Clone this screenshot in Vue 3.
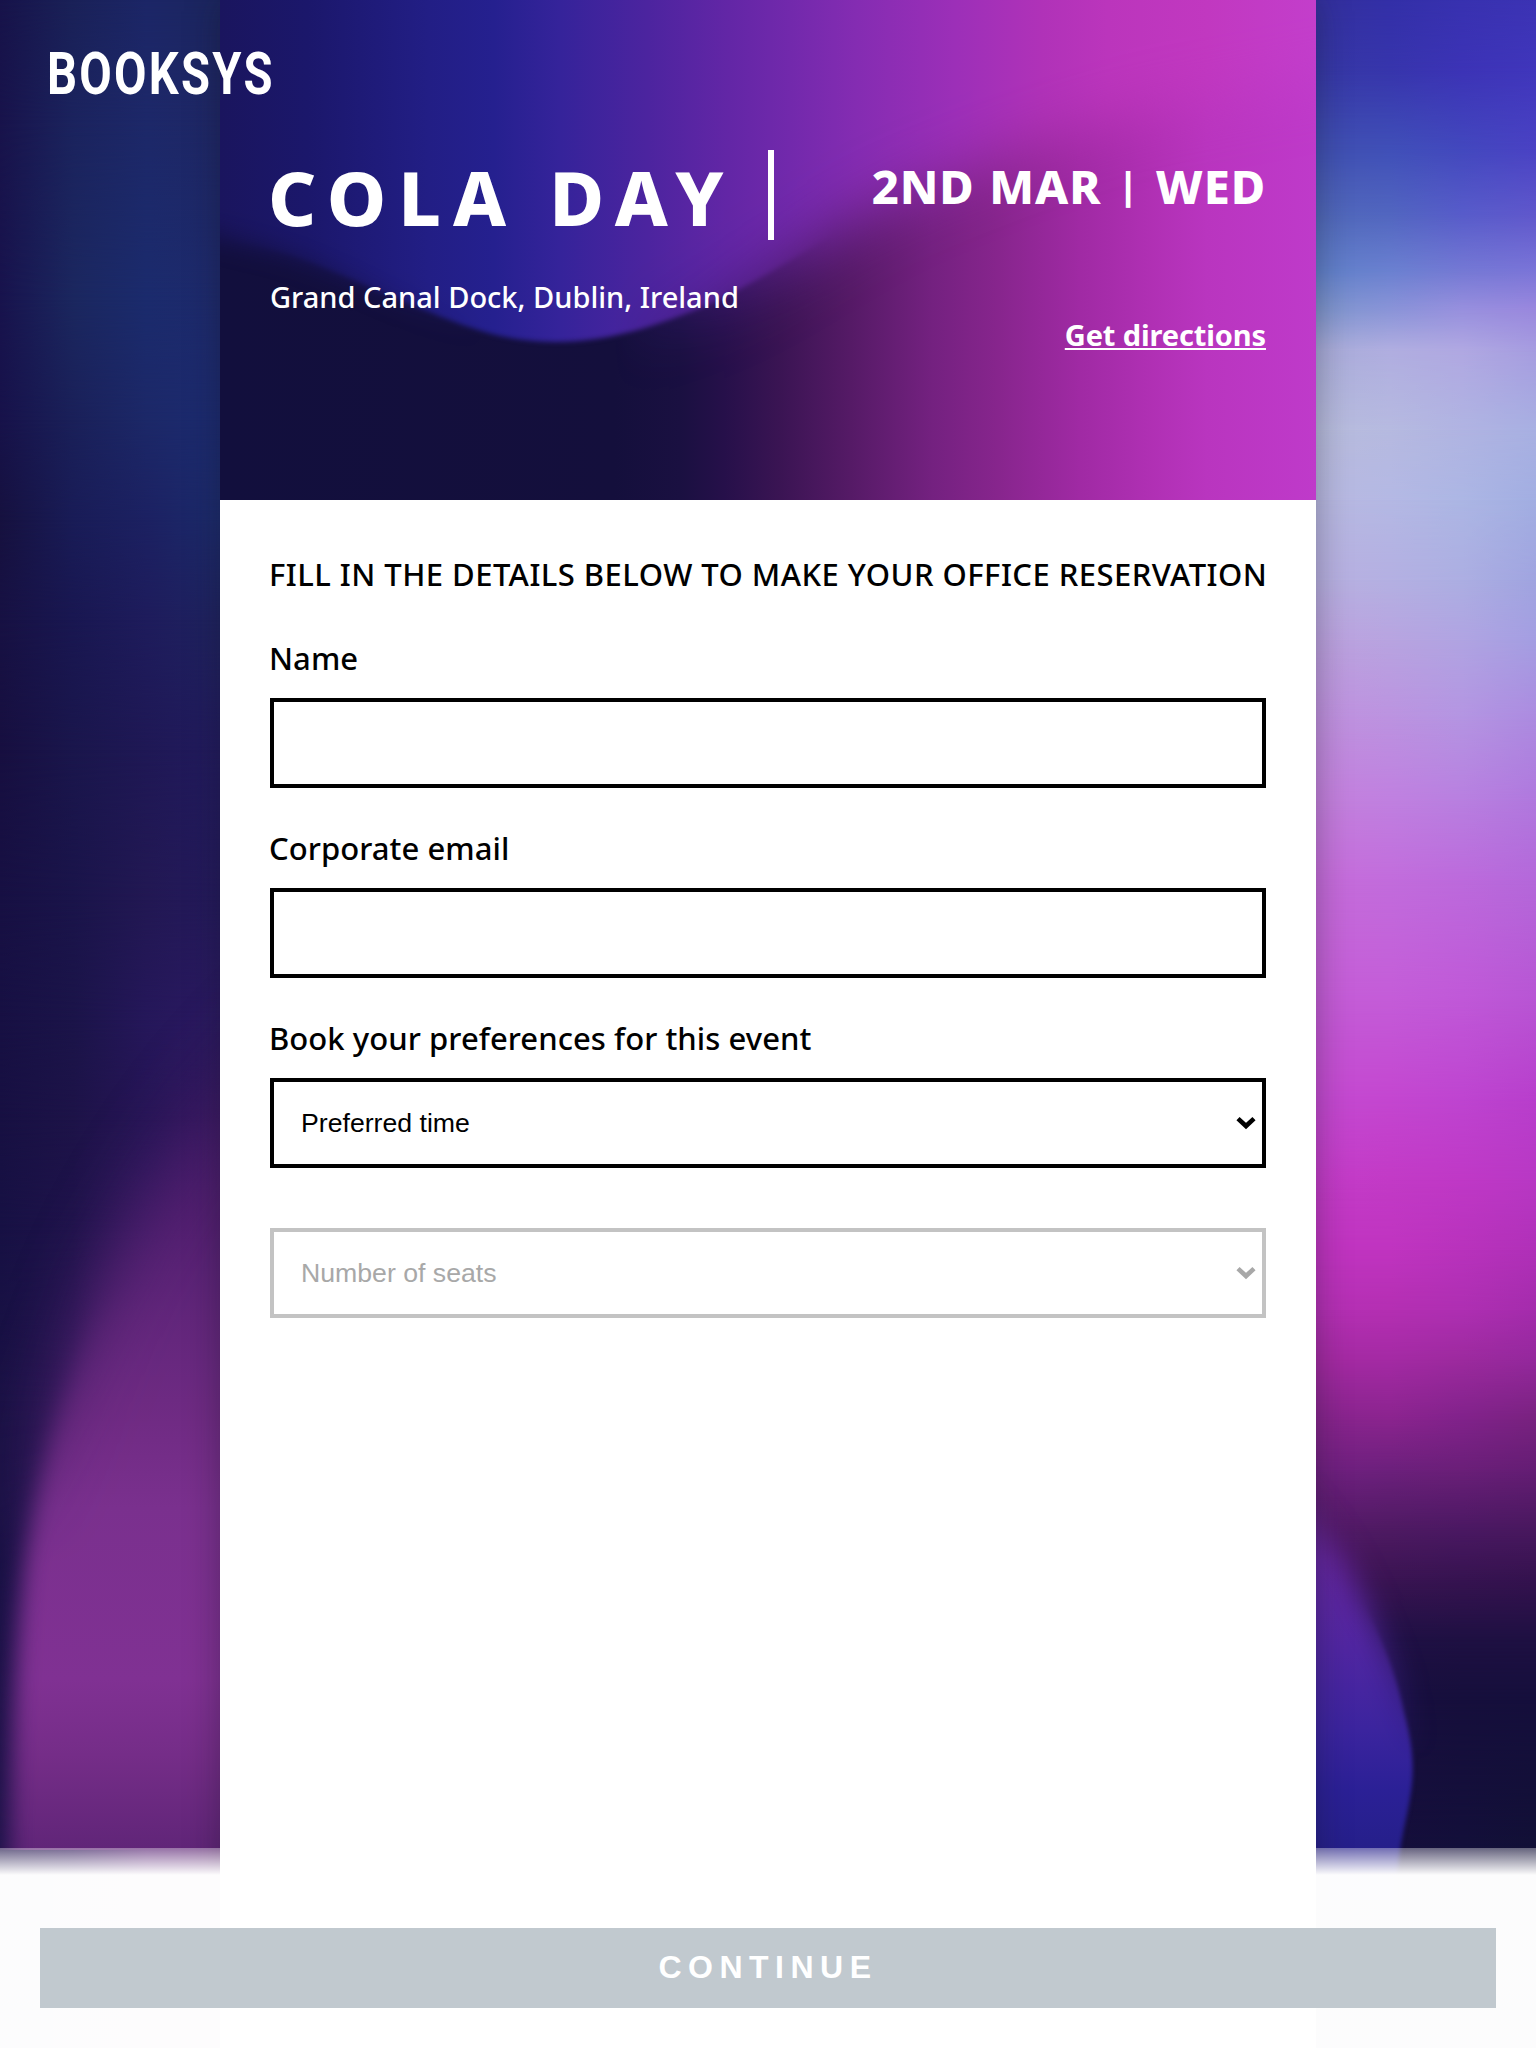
<script setup>
import { ref } from 'vue'

const name = ref('')
const email = ref('')

// Gradient meshes: [y, colours from left to right]
const leftMesh = [
  [0, '#17134a', '#1a2158', '#1c2667', '#1c265f'],
  [120, '#18134b', '#1b235e', '#1d2869', '#1f2766'],
  [300, '#18134d', '#1b275f', '#1b2b6d', '#1e2a6c'],
  [420, '#17124a', '#1a2059', '#1c2868', '#1c2b70'],
  [520, '#16113f', '#191c57', '#1c2162', '#1c2b6c'],
  [620, '#171143', '#191751', '#1e1c5c', '#1f2360'],
  [750, '#170f40', '#1a164c', '#1f1855', '#221b5e'],
  [900, '#171043', '#1a144a', '#221853', '#241a5c'],
  [1020, '#171043', '#1b1449', '#25175a', '#2c1a62'],
  [1120, '#171042', '#1d1348', '#271556', '#34185e'],
  [1230, '#171144', '#1f134b', '#34195e', '#481c68'],
  [1400, '#191144', '#241450', '#4a2068', '#602475'],
  [1850, '#1c1248', '#30185a', '#592475', '#602475']
]
const rightMesh = [
  [0, '#33309c', '#332fa8', '#3831b0', '#3c33b4'],
  [70, '#3638a4', '#3735ac', '#3c33b6', '#4036bc'],
  [150, '#4050b0', '#4050b8', '#4348be', '#4a42c4'],
  [215, '#5068b8', '#5266c0', '#585cca', '#6058cc'],
  [270, '#6080c8', '#6a80d0', '#7478d4', '#7a74d8'],
  [310, '#7f96cc', '#8a94d8', '#9890de', '#9a88de'],
  [350, '#a8acd8', '#b0aee0', '#b0a8e2', '#a69ce0'],
  [430, '#b8bcdc', '#b6bae0', '#b0b4e2', '#a8b0e2'],
  [500, '#b8b8e0', '#b4b8e4', '#acb6e4', '#a2aee2'],
  [580, '#b8b0e0', '#b4b0e2', '#acaee2', '#a0a4e0'],
  [640, '#bca2de', '#b8a4e0', '#b0a4e2', '#a49ee2'],
  [720, '#c090de', '#bc92e0', '#b494e2', '#ac8ae0'],
  [800, '#c480dc', '#c080e0', '#b87fe0', '#b078de'],
  [880, '#c66cda', '#c26cdc', '#bc6adc', '#b468da'],
  [1000, '#c45cd6', '#c45cd8', '#c058d8', '#b855d4'],
  [1100, '#c44ad0', '#c446d0', '#be44d0', '#b83ecc'],
  [1180, '#c43cc8', '#c23ac6', '#bf38c6', '#b838c4'],
  [1250, '#c034c0', '#c034c0', '#b832bc', '#b030b8'],
  [1310, '#b430b4', '#b42fb2', '#ae2fb2', '#a42cac'],
  [1360, '#a42aa2', '#a42aa4', '#9c2a9e', '#94289c'],
  [1420, '#86248c', '#8a248e', '#80228a', '#78227f'],
  [1470, '#702080', '#6c207c', '#6a1f78', '#641d74'],
  [1530, '#521a66', '#4e1a62', '#4a1862', '#48185e'],
  [1580, '#3c1452', '#3a1452', '#361350', '#34124e'],
  [1640, '#201044', '#1f1044', '#1e1042', '#1e1042'],
  [1700, '#181040', '#180f3f', '#160f3c', '#150f3c'],
  [1850, '#170f3e', '#150e3b', '#130f3a', '#121036']
]

function layers(mesh) {
  return mesh.map(([y, ...colours], i) => {
    const style = { background: `linear-gradient(to right, ${colours.join(', ')})` }
    if (i > 0) {
      style.maskImage = `linear-gradient(to bottom, transparent ${mesh[i - 1][0]}px, #000 ${y}px)`
    }
    return style
  })
}
const leftLayers = layers(leftMesh)
const rightLayers = layers(rightMesh)
</script>

<template>
  <div class="page">
    <div class="side">
      <div v-for="(s, i) in leftLayers" :key="i" class="layer" :style="s"></div>
      <svg class="glow" viewBox="0 0 220 950" aria-hidden="true">
        <defs>
          <linearGradient id="glowFill" x1="0" x2="0" y1="0" y2="950" gradientUnits="userSpaceOnUse">
            <stop offset=".1" stop-color="#2e195f" /><stop offset=".22" stop-color="#421b68" />
            <stop offset=".33" stop-color="#521f70" /><stop offset=".44" stop-color="#62267b" />
            <stop offset=".55" stop-color="#702b84" /><stop offset=".64" stop-color="#7a308e" />
            <stop offset=".82" stop-color="#803193" /><stop offset=".9" stop-color="#752d88" />
            <stop offset="1" stop-color="#602578" />
          </linearGradient>
          <linearGradient id="glowDown" x1="0" x2="0" y1="0" y2="950" gradientUnits="userSpaceOnUse">
            <stop offset=".4" stop-color="#000" /><stop offset=".7" stop-color="#fff" />
          </linearGradient>
          <filter id="g12" x="-40%" y="-20%" width="180%" height="140%"><feGaussianBlur stdDeviation="11" /></filter>
          <filter id="g30" x="-40%" y="-20%" width="180%" height="140%"><feGaussianBlur stdDeviation="36" /></filter>
          <path id="glowEdge" d="M330 90 C260 150 200 220 160 285 C125 340 100 390 78 450 C52 520 34 590 24 670 C15 750 11 850 9 1050 H330 Z" />
          <mask id="mGlow" maskUnits="userSpaceOnUse" x="0" y="0" width="220" height="950"><rect width="220" height="950" fill="url(#glowDown)" /></mask>
          <mask id="glowShape" maskUnits="userSpaceOnUse" x="0" y="0" width="220" height="950">
            <use href="#glowEdge" fill="#fff" filter="url(#g30)" />
            <g mask="url(#mGlow)">
              <rect width="220" height="950" fill="#000" />
              <use href="#glowEdge" fill="#fff" filter="url(#g12)" />
            </g>
          </mask>
        </defs>
        <rect width="220" height="950" fill="url(#glowFill)" mask="url(#glowShape)" />
      </svg>
    </div>

    <main class="card">
      <header class="hero">
        <svg class="hero-art" viewBox="0 0 1096 500" preserveAspectRatio="none" aria-hidden="true">
          <defs>
            <linearGradient id="base" x1="0" x2="1096" y1="0" y2="0" gradientUnits="userSpaceOnUse">
              <stop offset="0" stop-color="#120f3d" /><stop offset=".36" stop-color="#140f3c" />
              <stop offset=".42" stop-color="#1a1041" /><stop offset=".46" stop-color="#26104a" />
              <stop offset=".51" stop-color="#3a1453" /><stop offset=".575" stop-color="#551a66" />
              <stop offset=".65" stop-color="#742180" /><stop offset=".71" stop-color="#87258d" />
              <stop offset=".785" stop-color="#a02aa4" /><stop offset=".85" stop-color="#b030b4" />
              <stop offset=".9" stop-color="#b935bf" /><stop offset="1" stop-color="#bf3aca" />
            </linearGradient>
            <linearGradient id="wave" x1="0" x2="1096" y1="0" y2="0" gradientUnits="userSpaceOnUse">
              <stop offset="0" stop-color="#1a155e" /><stop offset=".08" stop-color="#1b176b" />
              <stop offset=".19" stop-color="#221e85" /><stop offset=".25" stop-color="#25208f" />
              <stop offset=".31" stop-color="#35239a" /><stop offset=".39" stop-color="#4c249f" />
              <stop offset=".465" stop-color="#6326a6" /><stop offset=".52" stop-color="#7229ac" />
              <stop offset=".58" stop-color="#842cb2" /><stop offset=".67" stop-color="#9c2fb8" />
              <stop offset=".75" stop-color="#b032b8" /><stop offset=".81" stop-color="#bb35bc" />
              <stop offset=".9" stop-color="#c138c0" /><stop offset="1" stop-color="#c33ecb" />
            </linearGradient>
            <linearGradient id="toRight" x1="0" x2="1096" y1="0" y2="0" gradientUnits="userSpaceOnUse">
              <stop offset=".36" stop-color="#000" /><stop offset=".56" stop-color="#fff" />
            </linearGradient>
            <linearGradient id="toLeft" x1="0" x2="1096" y1="0" y2="0" gradientUnits="userSpaceOnUse">
              <stop offset="0" stop-color="#000" /><stop offset=".24" stop-color="#fff" />
            </linearGradient>
            <filter id="b3" x="-10%" y="-20%" width="120%" height="140%"><feGaussianBlur stdDeviation="2.5" /></filter>
            <filter id="b12" x="-10%" y="-20%" width="120%" height="140%"><feGaussianBlur stdDeviation="13" /></filter>
            <filter id="b30" x="-10%" y="-30%" width="120%" height="160%"><feGaussianBlur stdDeviation="30" /></filter>
            <path id="edge" d="M-100 -120 V215 C-30 228 0 238 40 247 C90 258 130 280 180 300 C240 325 280 342 335 342 C390 342 440 325 490 304 C560 272 620 225 690 195 C760 165 840 135 930 112 L1200 60 V-120 Z" />
            <mask id="mRight" maskUnits="userSpaceOnUse" x="0" y="0" width="1096" height="500"><rect width="1096" height="500" fill="url(#toRight)" /></mask>
            <mask id="mLeft" maskUnits="userSpaceOnUse" x="0" y="0" width="1096" height="500"><rect width="1096" height="500" fill="url(#toLeft)" /></mask>
            <mask id="shape" maskUnits="userSpaceOnUse" x="0" y="0" width="1096" height="500">
              <use href="#edge" fill="#fff" filter="url(#b12)" />
              <g mask="url(#mLeft)">
                <rect width="1096" height="500" fill="#000" />
                <use href="#edge" fill="#fff" filter="url(#b3)" />
              </g>
              <g mask="url(#mRight)">
                <rect width="1096" height="500" fill="#000" />
                <use href="#edge" fill="#fff" filter="url(#b30)" />
              </g>
            </mask>
          </defs>
          <rect width="1096" height="500" fill="url(#base)" />
          <rect width="1096" height="500" fill="url(#wave)" mask="url(#shape)" />
        </svg>
        <div class="event">
          <h1>COLA DAY</h1>
          <p>Grand Canal Dock, Dublin, Ireland</p>
        </div>
        <div class="when">
          <h2>2ND MAR <span class="bar">|</span> WED</h2>
          <a href="#">Get directions</a>
        </div>
      </header>

      <form class="form" @submit.prevent>
        <h3>FILL IN THE DETAILS BELOW TO MAKE YOUR OFFICE RESERVATION</h3>
        <label for="name">Name</label>
        <input id="name" v-model="name" type="text" class="field">
        <label for="email">Corporate email</label>
        <input id="email" v-model="email" type="text" class="field">
        <label for="time">Book your preferences for this event</label>
        <div class="select">
          <select id="time" class="field"><option>Preferred time</option></select>
          <svg class="chevron" viewBox="0 0 20 14"><path d="M2 2.6 L10 10 L18 2.6" /></svg>
        </div>
        <div class="select off">
          <select class="field" disabled><option>Number of seats</option></select>
          <svg class="chevron" viewBox="0 0 20 14"><path d="M2 2.6 L10 10 L18 2.6" /></svg>
        </div>
      </form>
    </main>

    <div class="side">
      <div v-for="(s, i) in rightLayers" :key="i" class="layer" :style="s"></div>
      <svg class="blob" viewBox="0 0 220 500" aria-hidden="true">
        <defs>
          <linearGradient id="blobFill" x1="0" x2="0" y1="0" y2="500" gradientUnits="userSpaceOnUse">
            <stop offset=".1" stop-color="#6f2486" /><stop offset=".32" stop-color="#6628a4" />
            <stop offset=".5" stop-color="#5026a2" /><stop offset=".66" stop-color="#3b249e" />
            <stop offset=".78" stop-color="#2b2096" /><stop offset=".9" stop-color="#251f8a" />
          </linearGradient>
          <linearGradient id="down" x1="0" x2="0" y1="0" y2="500" gradientUnits="userSpaceOnUse">
            <stop offset=".4" stop-color="#000" /><stop offset=".72" stop-color="#fff" />
          </linearGradient>
          <filter id="s2" x="-40%" y="-20%" width="180%" height="140%"><feGaussianBlur stdDeviation="2" /></filter>
          <filter id="s18" x="-40%" y="-20%" width="180%" height="140%"><feGaussianBlur stdDeviation="15" /></filter>
          <path id="blobEdge" d="M-80 50 C-40 70 5 120 36 177 C62 230 80 270 88 312 C97 345 99 370 94 398 C90 425 84 435 80 490 V560 H-80 Z" />
          <mask id="mDown" maskUnits="userSpaceOnUse" x="0" y="0" width="220" height="500"><rect width="220" height="500" fill="url(#down)" /></mask>
          <mask id="blobShape" maskUnits="userSpaceOnUse" x="0" y="0" width="220" height="500">
            <use href="#blobEdge" fill="#fff" filter="url(#s18)" />
            <g mask="url(#mDown)">
              <rect width="220" height="500" fill="#000" />
              <use href="#blobEdge" fill="#fff" filter="url(#s2)" />
            </g>
          </mask>
        </defs>
        <rect width="220" height="500" fill="url(#blobFill)" mask="url(#blobShape)" />
      </svg>
    </div>

    <div class="logo">BOOKSYS</div>

    <footer class="footer">
      <button type="button">CONTINUE</button>
    </footer>
  </div>
</template>

<style>
body {
  margin: 0;
}
</style>

<style scoped>
.page {
  position: relative;
  display: flex;
  height: 2048px;
  overflow: hidden;
  font-family: "Noto Sans", sans-serif;
}
.side {
  position: relative;
  flex: 1;
  overflow: hidden;
}
.layer {
  position: absolute;
  inset: 0;
}
.glow {
  position: absolute;
  left: 0;
  top: 900px;
  width: 220px;
  height: 950px;
}
.blob {
  position: absolute;
  left: 0;
  top: 1400px;
  width: 220px;
  height: 500px;
}
.card {
  position: relative;
  z-index: 1;
  width: 1096px;
  background: #fff;
  box-shadow: 0 0 32px rgba(20, 20, 30, 0.36);
}
.hero {
  position: relative;
  display: flex;
  justify-content: space-between;
  box-sizing: border-box;
  height: 500px;
  padding: 150px 50px 0;
  color: #fff;
}
.hero-art {
  position: absolute;
  inset: 0;
  width: 100%;
  height: 100%;
}
.event,
.when {
  position: relative;
}
h1 {
  box-sizing: border-box;
  width: 506px;
  height: 90px;
  margin: 0 0 37px -2px;
  border-right: 6px solid #fff;
  font-size: 75px;
  font-weight: 800;
  line-height: 94px;
  letter-spacing: 11.9px;
  white-space: nowrap;
}
.event p {
  margin: 0;
  font-size: 29px;
  font-weight: 480;
  line-height: 40px;
}
.when {
  padding-top: 6px;
  text-align: right;
}
h2 {
  margin: 0 0 99px;
  font-size: 47px;
  font-weight: 780;
  line-height: 60px;
  letter-spacing: 0.9px;
  word-spacing: 1.5px;
  white-space: nowrap;
}
.bar {
  position: relative;
  top: -4px;
  padding: 0 2px;
  font-size: 38px;
  line-height: 1;
}
.when a {
  display: block;
  color: #fff;
  font-size: 29px;
  font-weight: 700;
  line-height: 40px;
  letter-spacing: -0.12px;
  text-decoration: underline;
  text-decoration-thickness: 2px;
  text-underline-offset: 2px;
  text-decoration-skip-ink: none;
}
.form {
  display: flex;
  flex-direction: column;
  padding: 54px 50px 0;
}
h3 {
  margin: 0 0 4px;
  font-size: 31px;
  font-weight: 480;
  line-height: 40px;
  letter-spacing: 0.46px;
  text-indent: -1px;
  white-space: nowrap;
}
label {
  margin: 40px 0 20px;
  font-size: 31px;
  font-weight: 480;
  line-height: 40px;
  text-indent: -1px;
  letter-spacing: 0.06px;
}
.field {
  display: block;
  box-sizing: border-box;
  width: 100%;
  height: 90px;
  margin: 0;
  padding: 0 27px;
  border: 4px solid #000;
  border-radius: 0;
  background: #fff;
  color: #000;
  font: 26.667px "Liberation Sans", sans-serif;
  appearance: none;
  outline: 0;
}
.select {
  position: relative;
}
.off {
  margin-top: 60px;
}
.off .field {
  border-color: #c3c3c3;
  color: #a8a8a8;
  opacity: 1;
}
.chevron {
  position: absolute;
  top: 38px;
  right: 10px;
  width: 20px;
  height: 14px;
  fill: none;
  stroke: #000;
  stroke-width: 4.6;
}
.off .chevron {
  stroke: #a8a8a8;
}
.logo {
  position: absolute;
  z-index: 2;
  top: 39px;
  left: 47px;
  color: #fff;
  font: 700 60px/70px Roboto, sans-serif;
  letter-spacing: 2.9px;
  transform: scaleX(0.785);
  transform-origin: left;
}
.footer {
  position: absolute;
  z-index: 2;
  bottom: 0;
  left: 0;
  display: flex;
  box-sizing: border-box;
  width: 100%;
  height: 200px;
  padding: 80px 40px 40px;
  background: linear-gradient(rgba(255, 255, 255, 0.35), rgba(255, 255, 255, 0.99) 27px);
}
button {
  flex: 1;
  padding: 0 0 2px;
  border: 0;
  background: #c1c9cf;
  color: #fff;
  font: 700 32px/78px "Liberation Sans", sans-serif;
  letter-spacing: 6.5px;
}
</style>
